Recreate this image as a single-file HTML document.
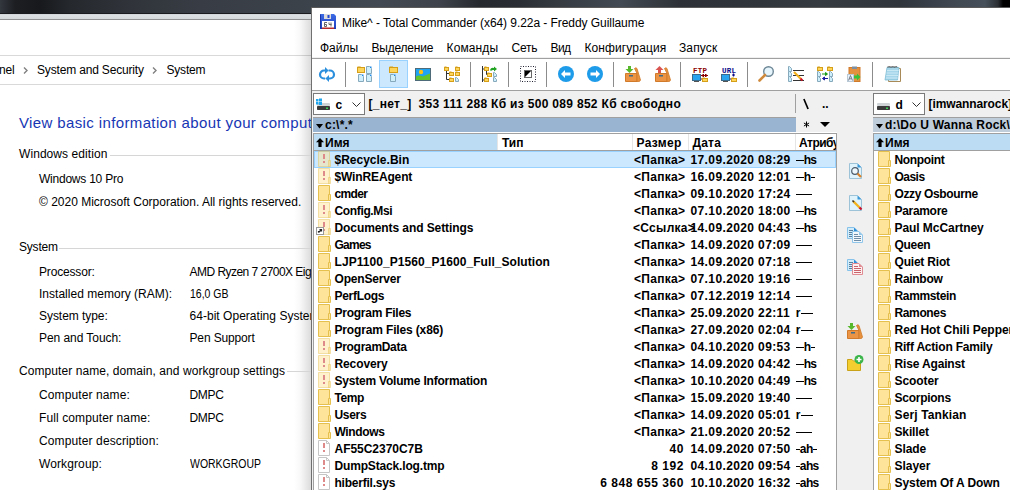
<!DOCTYPE html>
<html><head><meta charset="utf-8">
<style>
*{margin:0;padding:0;box-sizing:border-box}
html,body{width:1010px;height:490px;overflow:hidden;background:#fff;font-family:"Liberation Sans",sans-serif;color:#000}
body{position:relative}
.a{position:absolute;white-space:nowrap}
svg.a{overflow:visible}
.b{font-weight:bold}
</style></head><body>

<div class="a" style="left:0px;top:0px;width:1010px;height:14px;background:linear-gradient(90deg,#33373e 0px,#1c1e22 15px,#17191c 40px,#25282d 70px,#30343a 130px,#383d45 200px,#3c424a 300px,#434952 380px,#3e434b 440px,#26292e 480px,#2a2e34 520px,#363b42 560px,#434a53 620px,#2d3137 680px,#30353b 760px,#363b42 820px,#30353c 900px,#3f4650 950px,#46505a 985px,#2a2e33 998px,#000 1003px,#000 1010px)"></div>
<div class="a" style="left:0px;top:13px;width:312px;height:1px;background:#191b1f"></div>
<div class="a" style="left:0px;top:14px;width:312px;height:5px;background:linear-gradient(#cfd3d7,#dcdfe2 30%,#d6d9dc)"></div>
<div class="a" style="left:0px;top:19px;width:312px;height:1px;background:#8f9193"></div>
<div class="a" style="left:0px;top:55px;width:312px;height:1px;background:#d9d9d9"></div>
<div class="a" style="left:0px;top:84px;width:312px;height:1px;background:#d9d9d9"></div>
<div class="a" style="left:294px;top:20px;width:17px;height:470px;background:linear-gradient(90deg,rgba(0,0,0,0),rgba(0,0,0,.03) 40%,rgba(0,0,0,.14))"></div>
<div class="a " style="left:-1px;top:63.84px;font-size:12px;line-height:12px;letter-spacing:-0.2px">nel</div>
<svg class="a" style="left:23px;top:67px" width="5" height="7" viewBox="0 0 5 7"><path d="M1 0.5L4 3.5L1 6.5" stroke="#808080" stroke-width="1.4" fill="none"/></svg>
<svg class="a" style="left:152px;top:67px" width="5" height="7" viewBox="0 0 5 7"><path d="M1 0.5L4 3.5L1 6.5" stroke="#808080" stroke-width="1.4" fill="none"/></svg>
<div class="a " style="left:37px;top:63.84px;font-size:12px;line-height:12px;letter-spacing:-0.17px">System and Security</div>
<div class="a " style="left:166.5px;top:63.84px;font-size:12px;line-height:12px;letter-spacing:-0.2px">System</div>
<div class="a " style="left:19px;top:115.30px;font-size:15px;line-height:15px;color:#1636b4;letter-spacing:0.375px">View basic information about your computer</div>
<div class="a " style="left:19px;top:147.84px;font-size:12px;line-height:12px;letter-spacing:0.07px">Windows edition</div>
<div class="a" style="left:110px;top:155px;width:201px;height:1px;background:#d6d6d6"></div>
<div class="a " style="left:39px;top:172.84px;font-size:12px;line-height:12px;letter-spacing:-0.23px">Windows 10 Pro</div>
<div class="a " style="left:39px;top:195.84px;font-size:12px;line-height:12px;letter-spacing:0px">&copy; 2020 Microsoft Corporation. All rights reserved.</div>
<div class="a " style="left:19px;top:240.84px;font-size:12px;line-height:12px;letter-spacing:-0.2px">System</div>
<div class="a" style="left:59px;top:248px;width:252px;height:1px;background:#d6d6d6"></div>
<div class="a " style="left:39px;top:265.84px;font-size:12px;line-height:12px;letter-spacing:-0.17px">Processor:</div>
<div class="a " style="left:189.5px;top:265.84px;font-size:12px;line-height:12px;letter-spacing:-0.53px">AMD Ryzen 7 2700X Eight-Core Processor</div>
<div class="a " style="left:39px;top:287.84px;font-size:12px;line-height:12px;letter-spacing:0.02px">Installed memory (RAM):</div>
<div class="a " style="left:189.5px;top:287.84px;font-size:12px;line-height:12px;letter-spacing:0;transform:scaleX(0.875);transform-origin:0 0px">16,0 GB</div>
<div class="a " style="left:39px;top:309.84px;font-size:12px;line-height:12px;letter-spacing:-0.05px">System type:</div>
<div class="a " style="left:189.5px;top:309.84px;font-size:12px;line-height:12px;letter-spacing:0.03px">64-bit Operating System, x64-based processor</div>
<div class="a " style="left:39px;top:331.84px;font-size:12px;line-height:12px;letter-spacing:-0.06px">Pen and Touch:</div>
<div class="a " style="left:189.5px;top:331.84px;font-size:12px;line-height:12px;letter-spacing:-0.14px">Pen Support</div>
<div class="a " style="left:19px;top:364.84px;font-size:12px;line-height:12px;letter-spacing:0.07px">Computer name, domain, and workgroup settings</div>
<div class="a" style="left:287px;top:371px;width:24px;height:1px;background:#d6d6d6"></div>
<div class="a " style="left:39px;top:388.84px;font-size:12px;line-height:12px;letter-spacing:0.11px">Computer name:</div>
<div class="a " style="left:189.5px;top:388.84px;font-size:12px;line-height:12px;letter-spacing:-0.33px">DMPC</div>
<div class="a " style="left:39px;top:411.84px;font-size:12px;line-height:12px;letter-spacing:0.11px">Full computer name:</div>
<div class="a " style="left:189.5px;top:411.84px;font-size:12px;line-height:12px;letter-spacing:-0.33px">DMPC</div>
<div class="a " style="left:39px;top:434.84px;font-size:12px;line-height:12px;letter-spacing:0.12px">Computer description:</div>
<div class="a " style="left:39px;top:457.84px;font-size:12px;line-height:12px;letter-spacing:0.11px">Workgroup:</div>
<div class="a " style="left:189.5px;top:457.84px;font-size:12px;line-height:12px;letter-spacing:0;transform:scaleX(0.872);transform-origin:0 0px">WORKGROUP</div>
<div class="a" style="left:311px;top:7px;width:699px;height:483px;overflow:hidden">
<div class="a" style="left:0px;top:0px;width:699px;height:483px;background:#f0f0f0"></div>
<div class="a" style="left:0px;top:0px;width:1px;height:483px;background:#707070"></div>
<div class="a" style="left:0px;top:0px;width:699px;height:1px;background:#5a5a5a"></div>
<div class="a" style="left:1px;top:1px;width:698px;height:50px;background:#fff"></div>
<div class="a" style="left:1px;top:50px;width:698px;height:1px;background:#f0f0f0"></div>
<div class="a" style="left:1px;top:51px;width:698px;height:1px;background:#a0a0a0"></div>
<div class="a" style="left:1px;top:52px;width:698px;height:31px;background:#fff"></div>
<div class="a" style="left:1px;top:83px;width:698px;height:1px;background:#a0a0a0"></div>
<svg class="a" style="left:9px;top:7px" width="16" height="16" viewBox="0 0 16 16"><defs><linearGradient id="fg" x1="0" y1="0" x2="0" y2="1"><stop offset="0" stop-color="#3d6be6"/><stop offset="1" stop-color="#1f3fbf"/></linearGradient></defs><path d="M0 0H14L16 2V15H0Z" fill="url(#fg)"/><path d="M0.5 0.5V14.5H15.5" stroke="#1a36a6" fill="none"/><rect x="4" y="0" width="7" height="5" fill="#dcdcdc"/><rect x="7.5" y="1" width="2" height="3" fill="#2547c9"/><rect x="2" y="7" width="12" height="7" fill="#fff"/><rect x="2" y="13.5" width="12" height="1.5" fill="#b82a2a"/><path d="M7 8.5H4.5V12.5H6.5V10.5H4.5M9 8.5V10.5H11.5M11 8.5V12.5" stroke="#666" fill="none"/></svg>
<div class="a " style="left:31px;top:9.84px;font-size:12px;line-height:12px;letter-spacing:-0.06px">Mike^ - Total Commander (x64) 9.22a - Freddy Guillaume</div>
<div class="a " style="left:9px;top:34.84px;font-size:12px;line-height:12px;letter-spacing:0px">Файлы</div>
<div class="a " style="left:60.5px;top:34.84px;font-size:12px;line-height:12px;letter-spacing:-0.22px">Выделение</div>
<div class="a " style="left:135.60000000000002px;top:34.84px;font-size:12px;line-height:12px;letter-spacing:0.1px">Команды</div>
<div class="a " style="left:200.60000000000002px;top:34.84px;font-size:12px;line-height:12px;letter-spacing:-0.23px">Сеть</div>
<div class="a " style="left:239.60000000000002px;top:34.84px;font-size:12px;line-height:12px;letter-spacing:-0.6px">Вид</div>
<div class="a " style="left:273.4px;top:34.84px;font-size:12px;line-height:12px;letter-spacing:0.12px">Конфигурация</div>
<div class="a " style="left:368px;top:34.84px;font-size:12px;line-height:12px;letter-spacing:0.12px">Запуск</div>
<div class="a" style="left:34px;top:55px;width:1px;height:25px;background:#8c8c8c"></div>
<div class="a" style="left:159px;top:55px;width:1px;height:25px;background:#8c8c8c"></div>
<div class="a" style="left:197px;top:55px;width:1px;height:25px;background:#8c8c8c"></div>
<div class="a" style="left:235px;top:55px;width:1px;height:25px;background:#8c8c8c"></div>
<div class="a" style="left:302px;top:55px;width:1px;height:25px;background:#8c8c8c"></div>
<div class="a" style="left:369px;top:55px;width:1px;height:25px;background:#8c8c8c"></div>
<div class="a" style="left:436px;top:55px;width:1px;height:25px;background:#8c8c8c"></div>
<div class="a" style="left:561px;top:55px;width:1px;height:25px;background:#8c8c8c"></div>
<div class="a" style="left:68px;top:53px;width:29px;height:28px;background:#cce8ff;border:1px solid #99d1ff"></div>
<svg class="a" style="left:8px;top:60px" width="16" height="15" viewBox="0 0 16 15"><path d="M6.5 3.5H5A3.8 3.8 0 0 0 5 11.5h1.2M9.5 3.5H11A3.8 3.8 0 0 1 11 11.5H9.8" stroke="#2b8fdd" stroke-width="2.2" fill="none"/><path d="M6 0L9.6 3.5L6 7Z M10 8L6.4 11.5L10 15Z" fill="#2b8fdd"/></svg>
<svg class="a" style="left:46px;top:59px" width="16" height="16" viewBox="0 0 16 16"><rect x="0.5" y="1.5" width="7" height="5" fill="#fcd55a" stroke="#d59f1a"/><rect x="0.5" y="0.5" width="3.2" height="1.5" fill="#d59f1a"/><path d="M9.5 0.5H12.5L14.5 2.5V7.5H9.5Z" fill="#cfeefb" stroke="#86a9bb"/><rect x="13" y="0.5" width="1.5" height="1.5" fill="#1e88e5"/><path d="M1.5 8.5H4.5L6.5 10.5V15.5H1.5Z" fill="#cfeefb" stroke="#86a9bb"/><rect x="5" y="8.5" width="1.5" height="1.5" fill="#1e88e5"/><path d="M9.5 8.5H12.5L14.5 10.5V15.5H9.5Z" fill="#cfeefb" stroke="#86a9bb"/><rect x="13" y="8.5" width="1.5" height="1.5" fill="#1e88e5"/></svg>
<svg class="a" style="left:78px;top:59px" width="10" height="16" viewBox="0 0 10 16"><rect x="0.5" y="1.5" width="8" height="5" fill="#fcd55a" stroke="#d59f1a"/><rect x="0.5" y="0.5" width="3.6" height="1.5" fill="#d59f1a"/><path d="M1.5 8.5H4.5L6.5 10.5V15.5H1.5Z" fill="#cfeefb" stroke="#86a9bb"/><rect x="5" y="8.5" width="1.5" height="1.5" fill="#1e88e5"/></svg>
<svg class="a" style="left:104px;top:61px" width="16" height="13" viewBox="0 0 16 13"><rect x="0.5" y="0.5" width="15" height="12" fill="#1ea2f2" stroke="#4d6b78"/><circle cx="6" cy="4" r="2.2" fill="#ffc20e"/><path d="M1 8.5Q4 6.5 8 8.5Q11 7 15 5.5V12H1Z" fill="#62c42a"/></svg>
<svg class="a" style="left:133px;top:59px" width="16" height="16" viewBox="0 0 16 16"><path d="M2.5 5V13.5H5M2.5 7.5H5" stroke="#333" fill="none"/><rect x="0.5" y="1.5" width="4" height="3" fill="#fcd55a" stroke="#d59f1a"/><rect x="0.5" y="0.5" width="2.0" height="1.5" fill="#d59f1a"/><rect x="11.5" y="1.5" width="4" height="3" fill="#fcd55a" stroke="#d59f1a"/><rect x="11.5" y="0.5" width="2.0" height="1.5" fill="#d59f1a"/><rect x="5.5" y="6.5" width="4" height="3" fill="#fcd55a" stroke="#d59f1a"/><rect x="5.5" y="5.5" width="2.0" height="1.5" fill="#d59f1a"/><rect x="11.5" y="6.5" width="4" height="3" fill="#fcd55a" stroke="#d59f1a"/><rect x="11.5" y="5.5" width="2.0" height="1.5" fill="#d59f1a"/><rect x="5.5" y="12.5" width="4" height="3" fill="#fcd55a" stroke="#d59f1a"/><rect x="5.5" y="11.5" width="2.0" height="1.5" fill="#d59f1a"/><path d="M11.5 11.5H12.5L14.5 13.5V15.5H11.5Z" fill="#cfeefb" stroke="#86a9bb"/></svg>
<svg class="a" style="left:171px;top:59px" width="16" height="16" viewBox="0 0 16 16"><path d="M0.5 0V16M0.5 3H2M4.5 5V8.5H5M0.5 14H2" stroke="#333" fill="none"/><rect x="2.5" y="1.5" width="4" height="3" fill="#fcd55a" stroke="#d59f1a"/><rect x="2.5" y="0.5" width="2.0" height="1.5" fill="#d59f1a"/><rect x="5.5" y="7.5" width="4" height="3" fill="#fcd55a" stroke="#d59f1a"/><rect x="5.5" y="6.5" width="2.0" height="1.5" fill="#d59f1a"/><rect x="2.5" y="12.5" width="4" height="3" fill="#fcd55a" stroke="#d59f1a"/><rect x="2.5" y="11.5" width="2.0" height="1.5" fill="#d59f1a"/><path d="M11.5 6.5H12.5L14.5 8.5V10.5H11.5Z" fill="#cfeefb" stroke="#86a9bb"/><path d="M11.5 11.5H12.5L14.5 13.5V15.5H11.5Z" fill="#cfeefb" stroke="#86a9bb"/><path d="M8 4Q9 1 12 2V0.5L15 3L12 5.5V4Q10 3.5 9 5Z" fill="#22a323"/></svg>
<svg class="a" style="left:209px;top:59px" width="16" height="16" viewBox="0 0 16 16"><rect x="0.5" y="0.5" width="15" height="15" fill="none" stroke="#223" stroke-dasharray="1 1.5"/><rect x="4.5" y="4.5" width="7" height="7" fill="#fff" stroke="#666"/><path d="M5 5H11L5 11Z" fill="#000"/></svg>
<svg class="a" style="left:247px;top:59px" width="16" height="16" viewBox="0 0 16 16"><circle cx="8" cy="8" r="8" fill="#1e9be9"/><path d="M3 8L7 4V6.5H12.5V9.5H7V12Z" fill="#fff"/></svg>
<svg class="a" style="left:276px;top:59px" width="16" height="16" viewBox="0 0 16 16"><circle cx="8" cy="8" r="8" fill="#1e9be9"/><path d="M13 8L9 4V6.5H3.5V9.5H9V12Z" fill="#fff"/></svg>
<svg class="a" style="left:314px;top:59px" width="16" height="16" viewBox="0 0 16 16"><path d="M0.5 7.5H12V15.5H0.5Z" fill="#eb9445" stroke="#d07a2a"/><path d="M9.5 2.5Q11 1 12 2.5L15.5 14Q15 16 13 15.5L12 15.5V7.5Z" fill="#e8913f" stroke="#cf7a2a" stroke-width="0.8"/><rect x="4" y="9" width="4" height="1.5" fill="#3c6b8c"/><path d="M3 0H6V3H8.5L4.5 7L0.5 3H3Z" fill="#58b82c"/></svg>
<svg class="a" style="left:343.5px;top:59px" width="16" height="16" viewBox="0 0 16 16"><path d="M0.5 7.5H12V15.5H0.5Z" fill="#eb9445" stroke="#d07a2a"/><path d="M9.5 2.5Q11 1 12 2.5L15.5 14Q15 16 13 15.5L12 15.5V7.5Z" fill="#e8913f" stroke="#cf7a2a" stroke-width="0.8"/><rect x="4" y="9" width="4" height="1.5" fill="#3c6b8c"/><path d="M4.5 0L8.5 4H6V7H3V4H0.5Z" fill="#d9534f"/></svg>
<svg class="a" style="left:381px;top:59px" width="16" height="16" viewBox="0 0 16 16"><text x="1" y="6.5" font-family="Liberation Mono" font-weight="bold" font-size="7.5" fill="#8b0000" letter-spacing="0.3">FTP</text><rect x="0.5" y="8.5" width="8" height="6" fill="#2aa3ee" stroke="#3a6b8a"/><rect x="2" y="15" width="5" height="1" fill="#555"/><rect x="10.5" y="12.5" width="5" height="3" fill="#fcd55a" stroke="#d59f1a"/><rect x="10.5" y="11.5" width="2.4" height="1.5" fill="#d59f1a"/><path d="M9 9.5H16M10 9.5l1.5-1.5v3zM15 9.5l-1.5-1.5v3zM9 13H10" stroke="#8b0000" fill="#8b0000"/></svg>
<svg class="a" style="left:410px;top:59px" width="16" height="16" viewBox="0 0 16 16"><text x="1" y="6.5" font-family="Liberation Mono" font-weight="bold" font-size="7.5" fill="#0a0a8a" letter-spacing="0.3">URL</text><rect x="0.5" y="8.5" width="8" height="6" fill="#2aa3ee" stroke="#3a6b8a"/><rect x="2" y="15" width="5" height="1" fill="#555"/><rect x="10.5" y="12.5" width="5" height="3" fill="#fcd55a" stroke="#d59f1a"/><rect x="10.5" y="11.5" width="2.4" height="1.5" fill="#d59f1a"/><path d="M12.5 7.5V10.5M11 9H14M9 13H10" stroke="#0a0a8a" stroke-width="1.2"/></svg>
<svg class="a" style="left:447px;top:59px" width="17" height="16" viewBox="0 0 17 16"><circle cx="10.5" cy="5.5" r="4.8" fill="#e6f4fb" stroke="#6d8796" stroke-width="1.4"/><path d="M7 9L1.5 14.5" stroke="#d08a3c" stroke-width="2.6" stroke-linecap="round"/></svg>
<svg class="a" style="left:477px;top:59px" width="16" height="16" viewBox="0 0 16 16"><path d="M0.5 0.5H1.5L3.5 2.5V5.5H0.5Z" fill="#cfeefb" stroke="#86a9bb"/><path d="M0.5 5.5H1.5L3.5 7.5V10.5H0.5Z" fill="#cfeefb" stroke="#86a9bb"/><path d="M0.5 10.5H1.5L3.5 12.5V15.5H0.5Z" fill="#cfeefb" stroke="#86a9bb"/><path d="M5 4.5H16M5 9.5H16M5 14.5H16" stroke="#333"/><path d="M6 6L13 13" stroke="#f2b21e" stroke-width="2.2"/><path d="M12.5 12.5L14.5 14.5" stroke="#d2142a" stroke-width="2"/></svg>
<svg class="a" style="left:506px;top:59px" width="16" height="16" viewBox="0 0 16 16"><rect x="0.5" y="1.5" width="5" height="3" fill="#fcd55a" stroke="#d59f1a"/><rect x="0.5" y="0.5" width="2.4" height="1.5" fill="#d59f1a"/><rect x="10.5" y="1.5" width="5" height="3" fill="#fcd55a" stroke="#d59f1a"/><rect x="10.5" y="0.5" width="2.4" height="1.5" fill="#d59f1a"/><path d="M0.5 5.5H1.5L3.5 7.5V10.5H0.5Z" fill="#cfeefb" stroke="#86a9bb"/><path d="M0.5 10.5H1.5L3.5 12.5V15.5H0.5Z" fill="#cfeefb" stroke="#86a9bb"/><path d="M12.5 5.5H13.5L15.5 7.5V10.5H12.5Z" fill="#cfeefb" stroke="#86a9bb"/><path d="M12.5 10.5H13.5L15.5 12.5V15.5H12.5Z" fill="#cfeefb" stroke="#86a9bb"/><path d="M5 8H10M8.5 6.5L10.5 8L8.5 9.5Z" stroke="#189a18" fill="#189a18"/><path d="M6 12.5H11M7.5 11L5.5 12.5L7.5 14Z" stroke="#1a1aa0" fill="#1a1aa0"/></svg>
<svg class="a" style="left:536px;top:59px" width="14" height="16" viewBox="0 0 14 16"><rect x="2" y="1.5" width="11" height="14" fill="#e4913f" stroke="#cf7a2a"/><rect x="5" y="0.5" width="5" height="2.5" fill="#7d8fa0"/><rect x="0.5" y="8.5" width="6" height="7" fill="#e8f2fa" stroke="#b9c9d6"/><path d="M1.5 14.5L3.5 9.5L5.5 14.5M2.3 12.8H4.7" stroke="#6b7280" stroke-width="0.9" fill="none"/><path d="M7 9.5H10V7.5L13.5 11L10 14.5V12.5H7Z" fill="#38c13a"/></svg>
<svg class="a" style="left:573px;top:59px" width="17" height="16" viewBox="0 0 17 16"><path d="M4.5 2.5H16.5V15.5H4.5Z" fill="#fff" stroke="#a88a58"/><path d="M3 1.5H15L13.5 14H1Z" fill="#a6d6ea" stroke="#7fbcd4" stroke-width="0.8"/><path d="M3 4.5H14.6M2.6 7H14.3M2.3 9.5H14M2 12H13.7" stroke="#cdebf6" stroke-width="0.9"/><path d="M3.5 1.5l0.7-1.2 0.7 1.2 0.7-1.2 0.7 1.2 0.7-1.2 0.7 1.2 0.7-1.2 0.7 1.2 0.7-1.2 0.7 1.2 0.7-1.2 0.7 1.2 0.7-1.2 0.7 1.2" stroke="#444" stroke-width="0.7" fill="none"/></svg>
<div class="a" style="left:2px;top:86px;width:52px;height:22px;background:#fff;border:1px solid #7a7a7a"></div>
<svg class="a" style="left:5px;top:91px" width="15" height="13" viewBox="0 0 15 13"><rect x="1" y="5" width="13" height="3" rx="1" fill="#cfd3d6"/><rect x="1" y="8" width="13" height="4" rx="0.8" fill="#3a3a3a"/><rect x="10" y="9.5" width="2" height="1.5" fill="#39d353"/><rect x="0" y="1" width="2.5" height="2.5" fill="#1ea5ee"/><rect x="3" y="0.5" width="3" height="3" fill="#1ea5ee"/><rect x="0" y="4" width="2.5" height="2.5" fill="#1ea5ee"/><rect x="3" y="4" width="3" height="3" fill="#1ea5ee"/></svg>
<div class="a " style="left:24.5px;top:92.14px;font-size:12px;line-height:12px;font-weight:bold;letter-spacing:0.3px">c</div>
<svg class="a" style="left:41px;top:95px" width="9" height="5" viewBox="0 0 9 5"><path d="M0.5 0.5L4.5 4.5L8.5 0.5" stroke="#333" fill="none"/></svg>
<div class="a " style="left:57.5px;top:90.84px;font-size:12px;line-height:12px;font-weight:bold;letter-spacing:0.28px">[_нет_]</div>
<div class="a " style="left:107.5px;top:90.84px;font-size:12px;line-height:12px;font-weight:bold;letter-spacing:0.315px">353 111 288 Кб из 500 089 852 Кб свободно</div>
<div class="a" style="left:484px;top:87px;width:1px;height:19px;background:#a0a0a0"></div>
<svg class="a" style="left:492px;top:92px" width="6" height="10" viewBox="0 0 6 10"><path d="M0.9 0L5.1 10" stroke="#000" stroke-width="1.7"/></svg>
<div class="a " style="left:511px;top:90.84px;font-size:12px;line-height:12px;font-weight:bold">..</div>
<div class="a" style="left:562px;top:86px;width:52px;height:22px;background:#fff;border:1px solid #7a7a7a"></div>
<svg class="a" style="left:565px;top:91px" width="15" height="13" viewBox="0 0 15 13"><rect x="1" y="5" width="13" height="3" rx="1" fill="#cfd3d6"/><rect x="1" y="8" width="13" height="4" rx="0.8" fill="#3a3a3a"/><rect x="10" y="9.5" width="2" height="1.5" fill="#39d353"/></svg>
<div class="a " style="left:584.5px;top:92.14px;font-size:12px;line-height:12px;font-weight:bold;letter-spacing:0.3px">d</div>
<svg class="a" style="left:601px;top:95px" width="9" height="5" viewBox="0 0 9 5"><path d="M0.5 0.5L4.5 4.5L8.5 0.5" stroke="#333" fill="none"/></svg>
<div class="a " style="left:617.5px;top:90.84px;font-size:12px;line-height:12px;font-weight:bold;letter-spacing:-0.1px">[imwannarock]</div>
<div class="a" style="left:2px;top:110px;width:483px;height:1px;background:#a0a0a0"></div>
<div class="a" style="left:2px;top:111px;width:483px;height:14px;background:#99b4d1"></div>
<svg class="a" style="left:5px;top:117px" width="7" height="5" viewBox="0 0 7 5"><path d="M0 0H7L3.5 4.5Z" fill="#000"/></svg>
<div class="a " style="left:14px;top:111.84px;font-size:12px;line-height:12px;font-weight:bold;letter-spacing:0.22px">c:\*.*</div>
<svg class="a" style="left:492px;top:113.5px" width="7" height="7" viewBox="0 0 7 7"><path d="M3.5 0.5V6.5M0.9 2L6.1 5M0.9 5L6.1 2" stroke="#000" stroke-width="1"/></svg>
<svg class="a" style="left:509px;top:115px" width="10" height="5" viewBox="0 0 10 5"><path d="M0 0H10L5 5Z" fill="#000"/></svg>
<div class="a" style="left:562px;top:110px;width:137px;height:1px;background:#a0a0a0"></div>
<div class="a" style="left:562px;top:111px;width:137px;height:14px;background:#bfcddb"></div>
<svg class="a" style="left:565px;top:117px" width="7" height="5" viewBox="0 0 7 5"><path d="M0 0H7L3.5 4.5Z" fill="#000"/></svg>
<div class="a " style="left:574px;top:111.84px;font-size:12px;line-height:12px;font-weight:bold;letter-spacing:0.22px">d:\Do U Wanna Rock\*.*</div>
<div class="a" style="left:2px;top:125px;width:524px;height:1px;background:#fff"></div>
<div class="a" style="left:2px;top:126px;width:524px;height:1px;background:#a0a0a0"></div>
<div class="a" style="left:2px;top:127px;width:1px;height:356px;background:#a0a0a0"></div>
<div class="a" style="left:3px;top:127px;width:523px;height:356px;background:#fff"></div>
<div class="a" style="left:525px;top:127px;width:1px;height:356px;background:#a0a0a0"></div>
<div class="a" style="left:3px;top:143px;width:522px;height:1px;background:#a0a0a0"></div>
<div class="a" style="left:562px;top:125px;width:139px;height:1px;background:#fff"></div>
<div class="a" style="left:562px;top:126px;width:139px;height:1px;background:#a0a0a0"></div>
<div class="a" style="left:562px;top:127px;width:1px;height:356px;background:#a0a0a0"></div>
<div class="a" style="left:563px;top:127px;width:138px;height:356px;background:#fff"></div>
<div class="a" style="left:700px;top:127px;width:1px;height:356px;background:#a0a0a0"></div>
<div class="a" style="left:563px;top:143px;width:137px;height:1px;background:#a0a0a0"></div>
<div class="a" style="left:3px;top:127px;width:184px;height:16px;background:#bcdcf4"></div>
<svg class="a" style="left:5px;top:131px" width="8" height="9" viewBox="0 0 8 9"><path d="M4 0L8 4.2H5.6V9H2.4V4.2H0Z" fill="#000"/></svg>
<div class="a " style="left:14px;top:130.34px;font-size:12px;line-height:12px;font-weight:bold">Имя</div>
<div class="a" style="left:186px;top:127px;width:1px;height:16px;background:#e5e5e5"></div>
<div class="a" style="left:321px;top:127px;width:1px;height:16px;background:#e5e5e5"></div>
<div class="a" style="left:377px;top:127px;width:1px;height:16px;background:#e5e5e5"></div>
<div class="a" style="left:484px;top:127px;width:1px;height:16px;background:#e5e5e5"></div>
<div class="a " style="left:191px;top:130.34px;font-size:12px;line-height:12px;font-weight:bold">Тип</div>
<div class="a " style="left:325.5px;top:130.34px;font-size:12px;line-height:12px;font-weight:bold;letter-spacing:0.32px">Размер</div>
<div class="a " style="left:381.5px;top:130.34px;font-size:12px;line-height:12px;font-weight:bold;letter-spacing:0.2px">Дата</div>
<div class="a" style="left:485px;top:127px;width:40px;height:16px;background:#fff;overflow:hidden"></div>
<div class="a" style="left:488px;top:127px;width:37px;height:16px;overflow:hidden"><div class="a" style="left:0;top:3.34px;font-size:12px;line-height:12px;font-weight:bold;letter-spacing:-0.5px">Атрибуты</div></div>
<div class="a" style="left:563px;top:127px;width:136px;height:16px;background:#bcdcf4"></div>
<svg class="a" style="left:565px;top:131px" width="8" height="9" viewBox="0 0 8 9"><path d="M4 0L8 4.2H5.6V9H2.4V4.2H0Z" fill="#000"/></svg>
<div class="a " style="left:574px;top:130.34px;font-size:12px;line-height:12px;font-weight:bold">Имя</div>
<div class="a" style="left:3px;top:144px;width:522px;height:17px;background:#cce8ff;border:1px solid #99d1ff"></div>
<svg class="a" style="left:7px;top:144px" width="13" height="16" viewBox="0 0 13 16"><path d="M0.5 0.5H11.5V15.5H0.5Z" fill="rgba(253,228,154,.5)" stroke="rgba(230,192,79,.45)"/><path d="M10.5 9.5H12.5V15.5H10.5Z" fill="rgba(253,228,154,.5)" stroke="rgba(230,192,79,.45)"/><rect x="5" y="3" width="2" height="5" fill="#de8a8a"/><rect x="5" y="10" width="2" height="2" fill="#de8a8a"/></svg>
<div class="a " style="left:23.5px;top:147.34px;font-size:12px;line-height:12px;font-weight:bold;letter-spacing:0.0px">$Recycle.Bin</div>
<div class="a" style="right:325px;top:147.34px;font-size:12px;line-height:12px;font-weight:bold;letter-spacing:0.3px;margin-right:-0.3px">&lt;Папка&gt;</div>
<div class="a " style="left:379.5px;top:147.34px;font-size:12px;line-height:12px;font-weight:bold;letter-spacing:0.38px">17.09.2020 08:29</div>
<div class="a" style="left:485px;top:153px;width:4px;height:1px;background:#000"></div>
<div class="a" style="left:489px;top:153px;width:4px;height:1px;background:#000"></div>
<div class="a " style="left:492.70000000000005px;top:147.34px;font-size:12px;line-height:12px;font-weight:bold">h</div>
<div class="a " style="left:499.30000000000007px;top:147.34px;font-size:12px;line-height:12px;font-weight:bold">s</div>
<svg class="a" style="left:7px;top:161px" width="13" height="16" viewBox="0 0 13 16"><path d="M0.5 0.5H11.5V15.5H0.5Z" fill="rgba(253,228,154,.5)" stroke="rgba(230,192,79,.45)"/><path d="M10.5 9.5H12.5V15.5H10.5Z" fill="rgba(253,228,154,.5)" stroke="rgba(230,192,79,.45)"/><rect x="5" y="3" width="2" height="5" fill="#de8a8a"/><rect x="5" y="10" width="2" height="2" fill="#de8a8a"/></svg>
<div class="a " style="left:23.5px;top:164.34px;font-size:12px;line-height:12px;font-weight:bold;letter-spacing:-0.14px">$WinREAgent</div>
<div class="a" style="right:325px;top:164.34px;font-size:12px;line-height:12px;font-weight:bold;letter-spacing:0.3px;margin-right:-0.3px">&lt;Папка&gt;</div>
<div class="a " style="left:379.5px;top:164.34px;font-size:12px;line-height:12px;font-weight:bold;letter-spacing:0.38px">16.09.2020 12:01</div>
<div class="a" style="left:485px;top:170px;width:4px;height:1px;background:#000"></div>
<div class="a" style="left:489px;top:170px;width:4px;height:1px;background:#000"></div>
<div class="a " style="left:492.70000000000005px;top:164.34px;font-size:12px;line-height:12px;font-weight:bold">h</div>
<div class="a" style="left:499.6px;top:170px;width:4px;height:1px;background:#000"></div>
<svg class="a" style="left:7px;top:178px" width="13" height="16" viewBox="0 0 13 16"><path d="M0.5 0.5H11.5V15.5H0.5Z" fill="#fde49a" stroke="#e6c04f"/><path d="M10.5 9.5H12.5V15.5H10.5Z" fill="#fde49a" stroke="#e6c04f"/></svg>
<div class="a " style="left:23.5px;top:181.34px;font-size:12px;line-height:12px;font-weight:bold;letter-spacing:-0.625px">cmder</div>
<div class="a" style="right:325px;top:181.34px;font-size:12px;line-height:12px;font-weight:bold;letter-spacing:0.3px;margin-right:-0.3px">&lt;Папка&gt;</div>
<div class="a " style="left:379.5px;top:181.34px;font-size:12px;line-height:12px;font-weight:bold;letter-spacing:0.38px">09.10.2020 17:24</div>
<div class="a" style="left:485px;top:187px;width:4px;height:1px;background:#000"></div>
<div class="a" style="left:489px;top:187px;width:4px;height:1px;background:#000"></div>
<div class="a" style="left:493px;top:187px;width:4px;height:1px;background:#000"></div>
<div class="a" style="left:497px;top:187px;width:4px;height:1px;background:#000"></div>
<svg class="a" style="left:7px;top:195px" width="13" height="16" viewBox="0 0 13 16"><path d="M0.5 0.5H11.5V15.5H0.5Z" fill="rgba(253,228,154,.5)" stroke="rgba(230,192,79,.45)"/><path d="M10.5 9.5H12.5V15.5H10.5Z" fill="rgba(253,228,154,.5)" stroke="rgba(230,192,79,.45)"/><rect x="5" y="3" width="2" height="5" fill="#de8a8a"/><rect x="5" y="10" width="2" height="2" fill="#de8a8a"/></svg>
<div class="a " style="left:23.5px;top:198.34px;font-size:12px;line-height:12px;font-weight:bold;letter-spacing:-0.356px">Config.Msi</div>
<div class="a" style="right:325px;top:198.34px;font-size:12px;line-height:12px;font-weight:bold;letter-spacing:0.3px;margin-right:-0.3px">&lt;Папка&gt;</div>
<div class="a " style="left:379.5px;top:198.34px;font-size:12px;line-height:12px;font-weight:bold;letter-spacing:0.38px">07.10.2020 18:00</div>
<div class="a" style="left:485px;top:204px;width:4px;height:1px;background:#000"></div>
<div class="a" style="left:489px;top:204px;width:4px;height:1px;background:#000"></div>
<div class="a " style="left:492.70000000000005px;top:198.34px;font-size:12px;line-height:12px;font-weight:bold">h</div>
<div class="a " style="left:499.30000000000007px;top:198.34px;font-size:12px;line-height:12px;font-weight:bold">s</div>
<svg class="a" style="left:7px;top:212px" width="13" height="16" viewBox="0 0 13 16"><path d="M0.5 0.5H11.5V15.5H0.5Z" fill="rgba(253,228,154,.5)" stroke="rgba(230,192,79,.45)"/><path d="M10.5 9.5H12.5V15.5H10.5Z" fill="rgba(253,228,154,.5)" stroke="rgba(230,192,79,.45)"/><rect x="5" y="3" width="2" height="5" fill="#de8a8a"/><rect x="5" y="10" width="2" height="2" fill="#de8a8a"/><rect x="-1.5" y="8.5" width="7" height="7" fill="#fff" stroke="#999"/><path d="M0.5 13.5L3.5 10.5M1.5 10.5H3.5V12.5M0.5 13.5V12" stroke="#222" stroke-width="1.2" fill="none"/></svg>
<div class="a " style="left:23.5px;top:215.34px;font-size:12px;line-height:12px;font-weight:bold;letter-spacing:-0.086px">Documents and Settings</div>
<div class="a " style="left:322px;top:215.34px;font-size:12px;line-height:12px;font-weight:bold;letter-spacing:0.3px">&lt;Ссылка&gt;</div>
<div class="a " style="left:379.5px;top:215.34px;font-size:12px;line-height:12px;font-weight:bold;letter-spacing:0.38px">14.09.2020 04:43</div>
<div class="a" style="left:485px;top:221px;width:4px;height:1px;background:#000"></div>
<div class="a" style="left:489px;top:221px;width:4px;height:1px;background:#000"></div>
<div class="a " style="left:492.70000000000005px;top:215.34px;font-size:12px;line-height:12px;font-weight:bold">h</div>
<div class="a " style="left:499.30000000000007px;top:215.34px;font-size:12px;line-height:12px;font-weight:bold">s</div>
<svg class="a" style="left:7px;top:229px" width="13" height="16" viewBox="0 0 13 16"><path d="M0.5 0.5H11.5V15.5H0.5Z" fill="#fde49a" stroke="#e6c04f"/><path d="M10.5 9.5H12.5V15.5H10.5Z" fill="#fde49a" stroke="#e6c04f"/></svg>
<div class="a " style="left:23.5px;top:232.34px;font-size:12px;line-height:12px;font-weight:bold;letter-spacing:-0.75px">Games</div>
<div class="a" style="right:325px;top:232.34px;font-size:12px;line-height:12px;font-weight:bold;letter-spacing:0.3px;margin-right:-0.3px">&lt;Папка&gt;</div>
<div class="a " style="left:379.5px;top:232.34px;font-size:12px;line-height:12px;font-weight:bold;letter-spacing:0.38px">14.09.2020 07:09</div>
<div class="a" style="left:485px;top:238px;width:4px;height:1px;background:#000"></div>
<div class="a" style="left:489px;top:238px;width:4px;height:1px;background:#000"></div>
<div class="a" style="left:493px;top:238px;width:4px;height:1px;background:#000"></div>
<div class="a" style="left:497px;top:238px;width:4px;height:1px;background:#000"></div>
<svg class="a" style="left:7px;top:246px" width="13" height="16" viewBox="0 0 13 16"><path d="M0.5 0.5H11.5V15.5H0.5Z" fill="#fde49a" stroke="#e6c04f"/><path d="M10.5 9.5H12.5V15.5H10.5Z" fill="#fde49a" stroke="#e6c04f"/></svg>
<div class="a " style="left:23.5px;top:249.34px;font-size:12px;line-height:12px;font-weight:bold;letter-spacing:0.062px">LJP1100_P1560_P1600_Full_Solution</div>
<div class="a" style="right:325px;top:249.34px;font-size:12px;line-height:12px;font-weight:bold;letter-spacing:0.3px;margin-right:-0.3px">&lt;Папка&gt;</div>
<div class="a " style="left:379.5px;top:249.34px;font-size:12px;line-height:12px;font-weight:bold;letter-spacing:0.38px">14.09.2020 07:18</div>
<div class="a" style="left:485px;top:255px;width:4px;height:1px;background:#000"></div>
<div class="a" style="left:489px;top:255px;width:4px;height:1px;background:#000"></div>
<div class="a" style="left:493px;top:255px;width:4px;height:1px;background:#000"></div>
<div class="a" style="left:497px;top:255px;width:4px;height:1px;background:#000"></div>
<svg class="a" style="left:7px;top:263px" width="13" height="16" viewBox="0 0 13 16"><path d="M0.5 0.5H11.5V15.5H0.5Z" fill="#fde49a" stroke="#e6c04f"/><path d="M10.5 9.5H12.5V15.5H10.5Z" fill="#fde49a" stroke="#e6c04f"/></svg>
<div class="a " style="left:23.5px;top:266.34px;font-size:12px;line-height:12px;font-weight:bold;letter-spacing:-0.167px">OpenServer</div>
<div class="a" style="right:325px;top:266.34px;font-size:12px;line-height:12px;font-weight:bold;letter-spacing:0.3px;margin-right:-0.3px">&lt;Папка&gt;</div>
<div class="a " style="left:379.5px;top:266.34px;font-size:12px;line-height:12px;font-weight:bold;letter-spacing:0.38px">07.10.2020 19:16</div>
<div class="a" style="left:485px;top:272px;width:4px;height:1px;background:#000"></div>
<div class="a" style="left:489px;top:272px;width:4px;height:1px;background:#000"></div>
<div class="a" style="left:493px;top:272px;width:4px;height:1px;background:#000"></div>
<div class="a" style="left:497px;top:272px;width:4px;height:1px;background:#000"></div>
<svg class="a" style="left:7px;top:280px" width="13" height="16" viewBox="0 0 13 16"><path d="M0.5 0.5H11.5V15.5H0.5Z" fill="#fde49a" stroke="#e6c04f"/><path d="M10.5 9.5H12.5V15.5H10.5Z" fill="#fde49a" stroke="#e6c04f"/></svg>
<div class="a " style="left:23.5px;top:283.34px;font-size:12px;line-height:12px;font-weight:bold;letter-spacing:-0.286px">PerfLogs</div>
<div class="a" style="right:325px;top:283.34px;font-size:12px;line-height:12px;font-weight:bold;letter-spacing:0.3px;margin-right:-0.3px">&lt;Папка&gt;</div>
<div class="a " style="left:379.5px;top:283.34px;font-size:12px;line-height:12px;font-weight:bold;letter-spacing:0.38px">07.12.2019 12:14</div>
<div class="a" style="left:485px;top:289px;width:4px;height:1px;background:#000"></div>
<div class="a" style="left:489px;top:289px;width:4px;height:1px;background:#000"></div>
<div class="a" style="left:493px;top:289px;width:4px;height:1px;background:#000"></div>
<div class="a" style="left:497px;top:289px;width:4px;height:1px;background:#000"></div>
<svg class="a" style="left:7px;top:297px" width="13" height="16" viewBox="0 0 13 16"><path d="M0.5 0.5H11.5V15.5H0.5Z" fill="#fde49a" stroke="#e6c04f"/><path d="M10.5 9.5H12.5V15.5H10.5Z" fill="#fde49a" stroke="#e6c04f"/></svg>
<div class="a " style="left:23.5px;top:300.34px;font-size:12px;line-height:12px;font-weight:bold;letter-spacing:-0.25px">Program Files</div>
<div class="a" style="right:325px;top:300.34px;font-size:12px;line-height:12px;font-weight:bold;letter-spacing:0.3px;margin-right:-0.3px">&lt;Папка&gt;</div>
<div class="a " style="left:379.5px;top:300.34px;font-size:12px;line-height:12px;font-weight:bold;letter-spacing:0.38px">25.09.2020 22:11</div>
<div class="a " style="left:484.70000000000005px;top:300.34px;font-size:12px;line-height:12px;font-weight:bold">r</div>
<div class="a" style="left:489.70000000000005px;top:306px;width:4px;height:1px;background:#000"></div>
<div class="a" style="left:493.70000000000005px;top:306px;width:4px;height:1px;background:#000"></div>
<div class="a" style="left:497.70000000000005px;top:306px;width:4px;height:1px;background:#000"></div>
<svg class="a" style="left:7px;top:314px" width="13" height="16" viewBox="0 0 13 16"><path d="M0.5 0.5H11.5V15.5H0.5Z" fill="#fde49a" stroke="#e6c04f"/><path d="M10.5 9.5H12.5V15.5H10.5Z" fill="#fde49a" stroke="#e6c04f"/></svg>
<div class="a " style="left:23.5px;top:317.34px;font-size:12px;line-height:12px;font-weight:bold;letter-spacing:-0.15px">Program Files (x86)</div>
<div class="a" style="right:325px;top:317.34px;font-size:12px;line-height:12px;font-weight:bold;letter-spacing:0.3px;margin-right:-0.3px">&lt;Папка&gt;</div>
<div class="a " style="left:379.5px;top:317.34px;font-size:12px;line-height:12px;font-weight:bold;letter-spacing:0.38px">27.09.2020 02:04</div>
<div class="a " style="left:484.70000000000005px;top:317.34px;font-size:12px;line-height:12px;font-weight:bold">r</div>
<div class="a" style="left:489.70000000000005px;top:323px;width:4px;height:1px;background:#000"></div>
<div class="a" style="left:493.70000000000005px;top:323px;width:4px;height:1px;background:#000"></div>
<div class="a" style="left:497.70000000000005px;top:323px;width:4px;height:1px;background:#000"></div>
<svg class="a" style="left:7px;top:331px" width="13" height="16" viewBox="0 0 13 16"><path d="M0.5 0.5H11.5V15.5H0.5Z" fill="rgba(253,228,154,.5)" stroke="rgba(230,192,79,.45)"/><path d="M10.5 9.5H12.5V15.5H10.5Z" fill="rgba(253,228,154,.5)" stroke="rgba(230,192,79,.45)"/><rect x="5" y="3" width="2" height="5" fill="#de8a8a"/><rect x="5" y="10" width="2" height="2" fill="#de8a8a"/></svg>
<div class="a " style="left:23.5px;top:334.34px;font-size:12px;line-height:12px;font-weight:bold;letter-spacing:-0.3px">ProgramData</div>
<div class="a" style="right:325px;top:334.34px;font-size:12px;line-height:12px;font-weight:bold;letter-spacing:0.3px;margin-right:-0.3px">&lt;Папка&gt;</div>
<div class="a " style="left:379.5px;top:334.34px;font-size:12px;line-height:12px;font-weight:bold;letter-spacing:0.38px">04.10.2020 09:53</div>
<div class="a" style="left:485px;top:340px;width:4px;height:1px;background:#000"></div>
<div class="a" style="left:489px;top:340px;width:4px;height:1px;background:#000"></div>
<div class="a " style="left:492.70000000000005px;top:334.34px;font-size:12px;line-height:12px;font-weight:bold">h</div>
<div class="a" style="left:499.6px;top:340px;width:4px;height:1px;background:#000"></div>
<svg class="a" style="left:7px;top:348px" width="13" height="16" viewBox="0 0 13 16"><path d="M0.5 0.5H11.5V15.5H0.5Z" fill="rgba(253,228,154,.5)" stroke="rgba(230,192,79,.45)"/><path d="M10.5 9.5H12.5V15.5H10.5Z" fill="rgba(253,228,154,.5)" stroke="rgba(230,192,79,.45)"/><rect x="5" y="3" width="2" height="5" fill="#de8a8a"/><rect x="5" y="10" width="2" height="2" fill="#de8a8a"/></svg>
<div class="a " style="left:23.5px;top:351.34px;font-size:12px;line-height:12px;font-weight:bold;letter-spacing:-0.114px">Recovery</div>
<div class="a" style="right:325px;top:351.34px;font-size:12px;line-height:12px;font-weight:bold;letter-spacing:0.3px;margin-right:-0.3px">&lt;Папка&gt;</div>
<div class="a " style="left:379.5px;top:351.34px;font-size:12px;line-height:12px;font-weight:bold;letter-spacing:0.38px">14.09.2020 04:42</div>
<div class="a" style="left:485px;top:357px;width:4px;height:1px;background:#000"></div>
<div class="a" style="left:489px;top:357px;width:4px;height:1px;background:#000"></div>
<div class="a " style="left:492.70000000000005px;top:351.34px;font-size:12px;line-height:12px;font-weight:bold">h</div>
<div class="a " style="left:499.30000000000007px;top:351.34px;font-size:12px;line-height:12px;font-weight:bold">s</div>
<svg class="a" style="left:7px;top:365px" width="13" height="16" viewBox="0 0 13 16"><path d="M0.5 0.5H11.5V15.5H0.5Z" fill="rgba(253,228,154,.5)" stroke="rgba(230,192,79,.45)"/><path d="M10.5 9.5H12.5V15.5H10.5Z" fill="rgba(253,228,154,.5)" stroke="rgba(230,192,79,.45)"/><rect x="5" y="3" width="2" height="5" fill="#de8a8a"/><rect x="5" y="10" width="2" height="2" fill="#de8a8a"/></svg>
<div class="a " style="left:23.5px;top:368.34px;font-size:12px;line-height:12px;font-weight:bold;letter-spacing:-0.208px">System Volume Information</div>
<div class="a" style="right:325px;top:368.34px;font-size:12px;line-height:12px;font-weight:bold;letter-spacing:0.3px;margin-right:-0.3px">&lt;Папка&gt;</div>
<div class="a " style="left:379.5px;top:368.34px;font-size:12px;line-height:12px;font-weight:bold;letter-spacing:0.38px">10.10.2020 04:49</div>
<div class="a" style="left:485px;top:374px;width:4px;height:1px;background:#000"></div>
<div class="a" style="left:489px;top:374px;width:4px;height:1px;background:#000"></div>
<div class="a " style="left:492.70000000000005px;top:368.34px;font-size:12px;line-height:12px;font-weight:bold">h</div>
<div class="a " style="left:499.30000000000007px;top:368.34px;font-size:12px;line-height:12px;font-weight:bold">s</div>
<svg class="a" style="left:7px;top:382px" width="13" height="16" viewBox="0 0 13 16"><path d="M0.5 0.5H11.5V15.5H0.5Z" fill="#fde49a" stroke="#e6c04f"/><path d="M10.5 9.5H12.5V15.5H10.5Z" fill="#fde49a" stroke="#e6c04f"/></svg>
<div class="a " style="left:23.5px;top:385.34px;font-size:12px;line-height:12px;font-weight:bold;letter-spacing:-0.4px">Temp</div>
<div class="a" style="right:325px;top:385.34px;font-size:12px;line-height:12px;font-weight:bold;letter-spacing:0.3px;margin-right:-0.3px">&lt;Папка&gt;</div>
<div class="a " style="left:379.5px;top:385.34px;font-size:12px;line-height:12px;font-weight:bold;letter-spacing:0.38px">15.09.2020 19:40</div>
<div class="a" style="left:485px;top:391px;width:4px;height:1px;background:#000"></div>
<div class="a" style="left:489px;top:391px;width:4px;height:1px;background:#000"></div>
<div class="a" style="left:493px;top:391px;width:4px;height:1px;background:#000"></div>
<div class="a" style="left:497px;top:391px;width:4px;height:1px;background:#000"></div>
<svg class="a" style="left:7px;top:399px" width="13" height="16" viewBox="0 0 13 16"><path d="M0.5 0.5H11.5V15.5H0.5Z" fill="#fde49a" stroke="#e6c04f"/><path d="M10.5 9.5H12.5V15.5H10.5Z" fill="#fde49a" stroke="#e6c04f"/></svg>
<div class="a " style="left:23.5px;top:402.34px;font-size:12px;line-height:12px;font-weight:bold;letter-spacing:-0.3px">Users</div>
<div class="a" style="right:325px;top:402.34px;font-size:12px;line-height:12px;font-weight:bold;letter-spacing:0.3px;margin-right:-0.3px">&lt;Папка&gt;</div>
<div class="a " style="left:379.5px;top:402.34px;font-size:12px;line-height:12px;font-weight:bold;letter-spacing:0.38px">14.09.2020 05:01</div>
<div class="a " style="left:484.70000000000005px;top:402.34px;font-size:12px;line-height:12px;font-weight:bold">r</div>
<div class="a" style="left:489.70000000000005px;top:408px;width:4px;height:1px;background:#000"></div>
<div class="a" style="left:493.70000000000005px;top:408px;width:4px;height:1px;background:#000"></div>
<div class="a" style="left:497.70000000000005px;top:408px;width:4px;height:1px;background:#000"></div>
<svg class="a" style="left:7px;top:416px" width="13" height="16" viewBox="0 0 13 16"><path d="M0.5 0.5H11.5V15.5H0.5Z" fill="#fde49a" stroke="#e6c04f"/><path d="M10.5 9.5H12.5V15.5H10.5Z" fill="#fde49a" stroke="#e6c04f"/></svg>
<div class="a " style="left:23.5px;top:419.34px;font-size:12px;line-height:12px;font-weight:bold;letter-spacing:-0.367px">Windows</div>
<div class="a" style="right:325px;top:419.34px;font-size:12px;line-height:12px;font-weight:bold;letter-spacing:0.3px;margin-right:-0.3px">&lt;Папка&gt;</div>
<div class="a " style="left:379.5px;top:419.34px;font-size:12px;line-height:12px;font-weight:bold;letter-spacing:0.38px">21.09.2020 20:52</div>
<div class="a" style="left:485px;top:425px;width:4px;height:1px;background:#000"></div>
<div class="a" style="left:489px;top:425px;width:4px;height:1px;background:#000"></div>
<div class="a" style="left:493px;top:425px;width:4px;height:1px;background:#000"></div>
<div class="a" style="left:497px;top:425px;width:4px;height:1px;background:#000"></div>
<svg class="a" style="left:7px;top:433px" width="12" height="16" viewBox="0 0 12 16"><path d="M0.5 0.5H8.5L11.5 3.5V15.5H0.5Z" fill="#fff" stroke="#c6c6c6"/><path d="M8.5 0.5V3.5H11.5" fill="none" stroke="#c6c6c6"/><rect x="5" y="3" width="2" height="5" fill="#de8a8a"/><rect x="5" y="10" width="2" height="2" fill="#de8a8a"/></svg>
<div class="a " style="left:23.5px;top:436.34px;font-size:12px;line-height:12px;font-weight:bold;letter-spacing:-0.027px">AF55C2370C7B</div>
<div class="a" style="right:326.5px;top:436.34px;font-size:12px;line-height:12px;font-weight:bold;letter-spacing:0.55px;margin-right:-0.55px">40</div>
<div class="a " style="left:379.5px;top:436.34px;font-size:12px;line-height:12px;font-weight:bold;letter-spacing:0.38px">14.09.2020 07:50</div>
<div class="a" style="left:485px;top:442px;width:4px;height:1px;background:#000"></div>
<div class="a " style="left:488.70000000000005px;top:436.34px;font-size:12px;line-height:12px;font-weight:bold">a</div>
<div class="a " style="left:495.0px;top:436.34px;font-size:12px;line-height:12px;font-weight:bold">h</div>
<div class="a" style="left:501.9px;top:442px;width:4px;height:1px;background:#000"></div>
<svg class="a" style="left:7px;top:450px" width="12" height="16" viewBox="0 0 12 16"><path d="M0.5 0.5H8.5L11.5 3.5V15.5H0.5Z" fill="#fff" stroke="#c6c6c6"/><path d="M8.5 0.5V3.5H11.5" fill="none" stroke="#c6c6c6"/><rect x="5" y="3" width="2" height="5" fill="#de8a8a"/><rect x="5" y="10" width="2" height="2" fill="#de8a8a"/></svg>
<div class="a " style="left:23.5px;top:453.34px;font-size:12px;line-height:12px;font-weight:bold;letter-spacing:-0.162px">DumpStack.log.tmp</div>
<div class="a" style="right:326.5px;top:453.34px;font-size:12px;line-height:12px;font-weight:bold;letter-spacing:0.55px;margin-right:-0.55px">8 192</div>
<div class="a " style="left:379.5px;top:453.34px;font-size:12px;line-height:12px;font-weight:bold;letter-spacing:0.38px">04.10.2020 09:54</div>
<div class="a" style="left:485px;top:459px;width:4px;height:1px;background:#000"></div>
<div class="a " style="left:488.70000000000005px;top:453.34px;font-size:12px;line-height:12px;font-weight:bold">a</div>
<div class="a " style="left:495.0px;top:453.34px;font-size:12px;line-height:12px;font-weight:bold">h</div>
<div class="a " style="left:501.6px;top:453.34px;font-size:12px;line-height:12px;font-weight:bold">s</div>
<svg class="a" style="left:7px;top:467px" width="12" height="16" viewBox="0 0 12 16"><path d="M0.5 0.5H8.5L11.5 3.5V15.5H0.5Z" fill="#fff" stroke="#c6c6c6"/><path d="M8.5 0.5V3.5H11.5" fill="none" stroke="#c6c6c6"/><rect x="5" y="3" width="2" height="5" fill="#de8a8a"/><rect x="5" y="10" width="2" height="2" fill="#de8a8a"/></svg>
<div class="a " style="left:23.5px;top:470.34px;font-size:12px;line-height:12px;font-weight:bold;letter-spacing:-0.227px">hiberfil.sys</div>
<div class="a" style="right:326.5px;top:470.34px;font-size:12px;line-height:12px;font-weight:bold;letter-spacing:0.55px;margin-right:-0.55px">6 848 655 360</div>
<div class="a " style="left:379.5px;top:470.34px;font-size:12px;line-height:12px;font-weight:bold;letter-spacing:0.38px">10.10.2020 16:32</div>
<div class="a" style="left:485px;top:476px;width:4px;height:1px;background:#000"></div>
<div class="a " style="left:488.70000000000005px;top:470.34px;font-size:12px;line-height:12px;font-weight:bold">a</div>
<div class="a " style="left:495.0px;top:470.34px;font-size:12px;line-height:12px;font-weight:bold">h</div>
<div class="a " style="left:501.6px;top:470.34px;font-size:12px;line-height:12px;font-weight:bold">s</div>
<svg class="a" style="left:567px;top:144px" width="13" height="16" viewBox="0 0 13 16"><path d="M0.5 0.5H11.5V15.5H0.5Z" fill="#fde49a" stroke="#e6c04f"/><path d="M10.5 9.5H12.5V15.5H10.5Z" fill="#fde49a" stroke="#e6c04f"/></svg>
<div class="a " style="left:583.5px;top:147.34px;font-size:12px;line-height:12px;font-weight:bold;letter-spacing:-0.357px">Nonpoint</div>
<svg class="a" style="left:567px;top:161px" width="13" height="16" viewBox="0 0 13 16"><path d="M0.5 0.5H11.5V15.5H0.5Z" fill="#fde49a" stroke="#e6c04f"/><path d="M10.5 9.5H12.5V15.5H10.5Z" fill="#fde49a" stroke="#e6c04f"/></svg>
<div class="a " style="left:583.5px;top:164.34px;font-size:12px;line-height:12px;font-weight:bold;letter-spacing:-0.525px">Oasis</div>
<svg class="a" style="left:567px;top:178px" width="13" height="16" viewBox="0 0 13 16"><path d="M0.5 0.5H11.5V15.5H0.5Z" fill="#fde49a" stroke="#e6c04f"/><path d="M10.5 9.5H12.5V15.5H10.5Z" fill="#fde49a" stroke="#e6c04f"/></svg>
<div class="a " style="left:583.5px;top:181.34px;font-size:12px;line-height:12px;font-weight:bold;letter-spacing:-0.358px">Ozzy Osbourne</div>
<svg class="a" style="left:567px;top:195px" width="13" height="16" viewBox="0 0 13 16"><path d="M0.5 0.5H11.5V15.5H0.5Z" fill="#fde49a" stroke="#e6c04f"/><path d="M10.5 9.5H12.5V15.5H10.5Z" fill="#fde49a" stroke="#e6c04f"/></svg>
<div class="a " style="left:583.5px;top:198.34px;font-size:12px;line-height:12px;font-weight:bold;letter-spacing:-0.314px">Paramore</div>
<svg class="a" style="left:567px;top:212px" width="13" height="16" viewBox="0 0 13 16"><path d="M0.5 0.5H11.5V15.5H0.5Z" fill="#fde49a" stroke="#e6c04f"/><path d="M10.5 9.5H12.5V15.5H10.5Z" fill="#fde49a" stroke="#e6c04f"/></svg>
<div class="a " style="left:583.5px;top:215.34px;font-size:12px;line-height:12px;font-weight:bold;letter-spacing:-0.062px">Paul McCartney</div>
<svg class="a" style="left:567px;top:229px" width="13" height="16" viewBox="0 0 13 16"><path d="M0.5 0.5H11.5V15.5H0.5Z" fill="#fde49a" stroke="#e6c04f"/><path d="M10.5 9.5H12.5V15.5H10.5Z" fill="#fde49a" stroke="#e6c04f"/></svg>
<div class="a " style="left:583.5px;top:232.34px;font-size:12px;line-height:12px;font-weight:bold;letter-spacing:-0.3px">Queen</div>
<svg class="a" style="left:567px;top:246px" width="13" height="16" viewBox="0 0 13 16"><path d="M0.5 0.5H11.5V15.5H0.5Z" fill="#fde49a" stroke="#e6c04f"/><path d="M10.5 9.5H12.5V15.5H10.5Z" fill="#fde49a" stroke="#e6c04f"/></svg>
<div class="a " style="left:583.5px;top:249.34px;font-size:12px;line-height:12px;font-weight:bold;letter-spacing:-0.2px">Quiet Riot</div>
<svg class="a" style="left:567px;top:263px" width="13" height="16" viewBox="0 0 13 16"><path d="M0.5 0.5H11.5V15.5H0.5Z" fill="#fde49a" stroke="#e6c04f"/><path d="M10.5 9.5H12.5V15.5H10.5Z" fill="#fde49a" stroke="#e6c04f"/></svg>
<div class="a " style="left:583.5px;top:266.34px;font-size:12px;line-height:12px;font-weight:bold;letter-spacing:-0.283px">Rainbow</div>
<svg class="a" style="left:567px;top:280px" width="13" height="16" viewBox="0 0 13 16"><path d="M0.5 0.5H11.5V15.5H0.5Z" fill="#fde49a" stroke="#e6c04f"/><path d="M10.5 9.5H12.5V15.5H10.5Z" fill="#fde49a" stroke="#e6c04f"/></svg>
<div class="a " style="left:583.5px;top:283.34px;font-size:12px;line-height:12px;font-weight:bold;letter-spacing:-0.35px">Rammstein</div>
<svg class="a" style="left:567px;top:297px" width="13" height="16" viewBox="0 0 13 16"><path d="M0.5 0.5H11.5V15.5H0.5Z" fill="#fde49a" stroke="#e6c04f"/><path d="M10.5 9.5H12.5V15.5H10.5Z" fill="#fde49a" stroke="#e6c04f"/></svg>
<div class="a " style="left:583.5px;top:300.34px;font-size:12px;line-height:12px;font-weight:bold;letter-spacing:-0.367px">Ramones</div>
<svg class="a" style="left:567px;top:314px" width="13" height="16" viewBox="0 0 13 16"><path d="M0.5 0.5H11.5V15.5H0.5Z" fill="#fde49a" stroke="#e6c04f"/><path d="M10.5 9.5H12.5V15.5H10.5Z" fill="#fde49a" stroke="#e6c04f"/></svg>
<div class="a " style="left:583.5px;top:317.34px;font-size:12px;line-height:12px;font-weight:bold;letter-spacing:-0.03px">Red Hot Chili Peppers</div>
<svg class="a" style="left:567px;top:331px" width="13" height="16" viewBox="0 0 13 16"><path d="M0.5 0.5H11.5V15.5H0.5Z" fill="#fde49a" stroke="#e6c04f"/><path d="M10.5 9.5H12.5V15.5H10.5Z" fill="#fde49a" stroke="#e6c04f"/></svg>
<div class="a " style="left:583.5px;top:334.34px;font-size:12px;line-height:12px;font-weight:bold;letter-spacing:-0.2px">Riff Action Family</div>
<svg class="a" style="left:567px;top:348px" width="13" height="16" viewBox="0 0 13 16"><path d="M0.5 0.5H11.5V15.5H0.5Z" fill="#fde49a" stroke="#e6c04f"/><path d="M10.5 9.5H12.5V15.5H10.5Z" fill="#fde49a" stroke="#e6c04f"/></svg>
<div class="a " style="left:583.5px;top:351.34px;font-size:12px;line-height:12px;font-weight:bold;letter-spacing:-0.155px">Rise Against</div>
<svg class="a" style="left:567px;top:365px" width="13" height="16" viewBox="0 0 13 16"><path d="M0.5 0.5H11.5V15.5H0.5Z" fill="#fde49a" stroke="#e6c04f"/><path d="M10.5 9.5H12.5V15.5H10.5Z" fill="#fde49a" stroke="#e6c04f"/></svg>
<div class="a " style="left:583.5px;top:368.34px;font-size:12px;line-height:12px;font-weight:bold;letter-spacing:-0.083px">Scooter</div>
<svg class="a" style="left:567px;top:382px" width="13" height="16" viewBox="0 0 13 16"><path d="M0.5 0.5H11.5V15.5H0.5Z" fill="#fde49a" stroke="#e6c04f"/><path d="M10.5 9.5H12.5V15.5H10.5Z" fill="#fde49a" stroke="#e6c04f"/></svg>
<div class="a " style="left:583.5px;top:385.34px;font-size:12px;line-height:12px;font-weight:bold;letter-spacing:-0.263px">Scorpions</div>
<svg class="a" style="left:567px;top:399px" width="13" height="16" viewBox="0 0 13 16"><path d="M0.5 0.5H11.5V15.5H0.5Z" fill="#fde49a" stroke="#e6c04f"/><path d="M10.5 9.5H12.5V15.5H10.5Z" fill="#fde49a" stroke="#e6c04f"/></svg>
<div class="a " style="left:583.5px;top:402.34px;font-size:12px;line-height:12px;font-weight:bold;letter-spacing:0.127px">Serj Tankian</div>
<svg class="a" style="left:567px;top:416px" width="13" height="16" viewBox="0 0 13 16"><path d="M0.5 0.5H11.5V15.5H0.5Z" fill="#fde49a" stroke="#e6c04f"/><path d="M10.5 9.5H12.5V15.5H10.5Z" fill="#fde49a" stroke="#e6c04f"/></svg>
<div class="a " style="left:583.5px;top:419.34px;font-size:12px;line-height:12px;font-weight:bold;letter-spacing:-0.15px">Skillet</div>
<svg class="a" style="left:567px;top:433px" width="13" height="16" viewBox="0 0 13 16"><path d="M0.5 0.5H11.5V15.5H0.5Z" fill="#fde49a" stroke="#e6c04f"/><path d="M10.5 9.5H12.5V15.5H10.5Z" fill="#fde49a" stroke="#e6c04f"/></svg>
<div class="a " style="left:583.5px;top:436.34px;font-size:12px;line-height:12px;font-weight:bold;letter-spacing:-0.075px">Slade</div>
<svg class="a" style="left:567px;top:450px" width="13" height="16" viewBox="0 0 13 16"><path d="M0.5 0.5H11.5V15.5H0.5Z" fill="#fde49a" stroke="#e6c04f"/><path d="M10.5 9.5H12.5V15.5H10.5Z" fill="#fde49a" stroke="#e6c04f"/></svg>
<div class="a " style="left:583.5px;top:453.34px;font-size:12px;line-height:12px;font-weight:bold;letter-spacing:-0.02px">Slayer</div>
<svg class="a" style="left:567px;top:467px" width="13" height="16" viewBox="0 0 13 16"><path d="M0.5 0.5H11.5V15.5H0.5Z" fill="#fde49a" stroke="#e6c04f"/><path d="M10.5 9.5H12.5V15.5H10.5Z" fill="#fde49a" stroke="#e6c04f"/></svg>
<div class="a " style="left:583.5px;top:470.34px;font-size:12px;line-height:12px;font-weight:bold;letter-spacing:-0.067px">System Of A Down</div>
<svg class="a" style="left:538px;top:156px" width="14" height="16" viewBox="0 0 14 16"><path d="M0.5 0.5H8.5L12.5 4.5V15.5H0.5Z" fill="#dff3fc" stroke="#9cc3d8"/><path d="M8.5 0.5V4.5H12.5Z" fill="#3a9ad9"/><circle cx="6" cy="8" r="3.3" fill="#eef8fc" stroke="#4b5b6b" stroke-width="1.2"/><path d="M8.5 10.5L12 14" stroke="#d9822b" stroke-width="2.2"/></svg>
<svg class="a" style="left:538px;top:188px" width="14" height="16" viewBox="0 0 14 16"><path d="M0.5 0.5H8.5L12.5 4.5V15.5H0.5Z" fill="#dff3fc" stroke="#9cc3d8"/><path d="M8.5 0.5V4.5H12.5Z" fill="#3a9ad9"/><path d="M4 6L11 13" stroke="#f2b21e" stroke-width="2.4"/><path d="M3.5 5.5L5 7" stroke="#333" stroke-width="1.5"/><path d="M10.5 12.5L12.5 14.5" stroke="#c8102e" stroke-width="2.2"/></svg>
<svg class="a" style="left:536px;top:220px" width="16" height="16" viewBox="0 0 16 16"><path d="M0.5 0.5H7L10.5 4V11.5H0.5Z" fill="#d3ecfa" stroke="#86c2ea"/><path d="M7 0.5V4H10.5Z" fill="#2d8fd8"/><path d="M2 3.5H6M2 5.5H6M2 7.5H6M2 9.5H6" stroke="#58809e" stroke-width="1.1"/><path d="M5.5 4.5H12L15.5 8V15.5H5.5Z" fill="#f3f8fc" stroke="#8fc6ea"/><path d="M12 4.5V8H15.5Z" fill="#8fc6ea"/><path d="M7 7.5H11M7 9.5H14M7 11.5H14M7 13.5H14" stroke="#6f8ca6" stroke-width="1.2"/></svg>
<svg class="a" style="left:536px;top:252px" width="16" height="16" viewBox="0 0 16 16"><path d="M0.5 0.5H7L10.5 4V11.5H0.5Z" fill="#d3ecfa" stroke="#86c2ea"/><path d="M7 0.5V4H10.5Z" fill="#2d8fd8"/><path d="M2 3.5H6M2 5.5H6M2 7.5H6M2 9.5H6" stroke="#58809e" stroke-width="1.1"/><path d="M5.5 4.5H12L15.5 8V15.5H5.5Z" fill="#fdf1f2" stroke="#e08a92"/><path d="M12 4.5V8H15.5Z" fill="#e08a92"/><path d="M7 7.5H11M7 9.5H14M7 11.5H14M7 13.5H14" stroke="#c9636c" stroke-width="1.2"/></svg>
<svg class="a" style="left:536px;top:316px" width="16" height="16" viewBox="0 0 16 16"><path d="M0.5 7.5H12V15.5H0.5Z" fill="#eb9445" stroke="#d07a2a"/><path d="M9.5 2.5Q11 1 12 2.5L15.5 14Q15 16 13 15.5L12 15.5V7.5Z" fill="#e8913f" stroke="#cf7a2a" stroke-width="0.8"/><rect x="4" y="9" width="4" height="1.5" fill="#3c6b8c"/><path d="M3 0H6V3H8.5L4.5 7L0.5 3H3Z" fill="#58b82c"/></svg>
<svg class="a" style="left:536px;top:348px" width="17" height="16" viewBox="0 0 17 16"><path d="M0.5 4.5H5L6.5 6H13.5V15.5H0.5Z" fill="#f4cd2f" stroke="#c9a21a"/><circle cx="12" cy="4.5" r="4.5" fill="#3bb54a"/><path d="M12 2V7M9.5 4.5H14.5" stroke="#fff" stroke-width="1.6"/></svg>
</div>
</body></html>
